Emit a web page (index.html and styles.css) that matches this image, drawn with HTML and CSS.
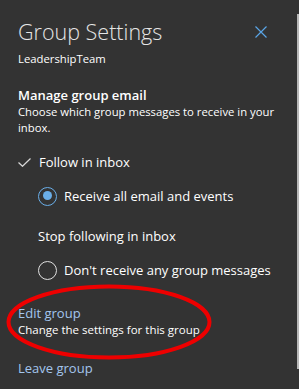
FILE: index.html
```html
<!DOCTYPE html>
<html lang="en">
<head>
    <meta charset="UTF-8">
    <meta name="viewport" content="width=device-width, initial-scale=1.0">
    <title>Group Settings</title>
    <link rel="stylesheet" href="styles.css">
</head>
<body>
    <div class="panel">
        <div class="header">
            <h1>Group Settings</h1>
            <button class="close" aria-label="Close">
                <svg width="12" height="12" viewBox="0 0 12 12"><path d="M0.5 0.5 L11.5 11.5 M11.5 0.5 L0.5 11.5" stroke="#5aa5e6" stroke-width="1.2" fill="none"/></svg>
            </button>
        </div>
        <div class="group-name">LeadershipTeam</div>

        <h2>Manage group email</h2>
        <p class="desc">Choose which group messages to receive in your inbox.</p>

        <div class="option checked">
            <svg class="check" width="13" height="9" viewBox="0 0 13 9"><path d="M0.5 4.5 L4.5 8.3 L12.5 0.5" stroke="#d8d8d8" stroke-width="1.2" fill="none"/></svg>
            <span>Follow in inbox</span>
        </div>
        <div class="radio selected">
            <span class="dot"></span>
            <span>Receive all email and events</span>
        </div>
        <div class="option">
            <span>Stop following in inbox</span>
        </div>
        <div class="radio">
            <span class="dot"></span>
            <span>Don't receive any group messages</span>
        </div>

        <div class="edit">
            <a href="#" class="link">Edit group</a>
            <div class="hint">Change the settings for this group</div>
            <!-- annotation drawn over the screenshot -->
            <svg class="ring" width="210" height="80" viewBox="0 0 210 80"><ellipse cx="105" cy="40" rx="100.5" ry="35.5" stroke="#ee0000" stroke-width="4" fill="none"/></svg>
        </div>

        <a href="#" class="link leave">Leave group</a>
    </div>
    <div class="scrollbar"></div>
</body>
</html>
```

FILE: styles.css
```css
html, body {
    height: 100%;
}
body {
    margin: 0;
    background-color: #333333;
    color: #ffffff;
    font-family: "Open Sans", sans-serif;
    overflow: hidden;
    position: relative;
}
.panel {
    padding: 18px 0 0 18px;
    width: 267px;
}
.header {
    display: flex;
    justify-content: space-between;
    align-items: center;
}
h1 {
    margin: 0;
    font-size: 21.5px;
    font-weight: 300;
    color: #e6e6e6;
    line-height: 28px;
}
.close {
    background: none;
    border: none;
    padding: 0;
    margin-right: 18px;
    width: 12px;
    height: 12px;
    display: flex;
}
.group-name {
    font-size: 11.3px;
    margin-top: 5px;
    line-height: 15px;
}
h2 {
    margin: 20px 0 0;
    font-size: 13px;
    font-weight: 600;
    line-height: 18px;
}
.desc {
    margin: 0;
    font-size: 11.3px;
    line-height: 16px;
}
.option {
    display: flex;
    align-items: center;
    font-size: 13px;
    line-height: 18px;
    margin-top: 21px;
    padding-left: 20px;
    height: 18px;
}
.option.checked {
    margin-top: 17px;
    padding-left: 0;
}
.check {
    margin-right: 8px;
    margin-top: 1px;
}
.radio {
    display: flex;
    align-items: center;
    font-size: 13px;
    line-height: 18px;
    margin-top: 15px;
    padding-left: 20px;
    height: 20px;
}
.dot {
    width: 19px;
    height: 19px;
    border: 1.5px solid #e0e0e0;
    border-radius: 50%;
    margin-right: 7px;
    box-sizing: border-box;
    position: relative;
    flex-shrink: 0;
}
.radio.selected .dot {
    border-color: #6aaee8;
}
.radio.selected .dot::after {
    content: "";
    position: absolute;
    left: 3.5px;
    top: 3.5px;
    width: 9px;
    height: 9px;
    border-radius: 50%;
    background-color: #6aaee8;
}
.edit {
    position: relative;
    margin-top: 24px;
}
.link {
    display: block;
    color: #a3c6ee;
    text-decoration: none;
    font-size: 13px;
    line-height: 18px;
}
.hint {
    font-size: 11.5px;
    line-height: 16px;
}
.ring {
    position: absolute;
    left: -14.5px;
    top: -22.5px;
}
.leave {
    margin-top: 21px;
}
.scrollbar {
    position: absolute;
    right: 0;
    top: 14px;
    width: 2px;
    height: 355px;
    background-color: #b9b9b9;
}
```
